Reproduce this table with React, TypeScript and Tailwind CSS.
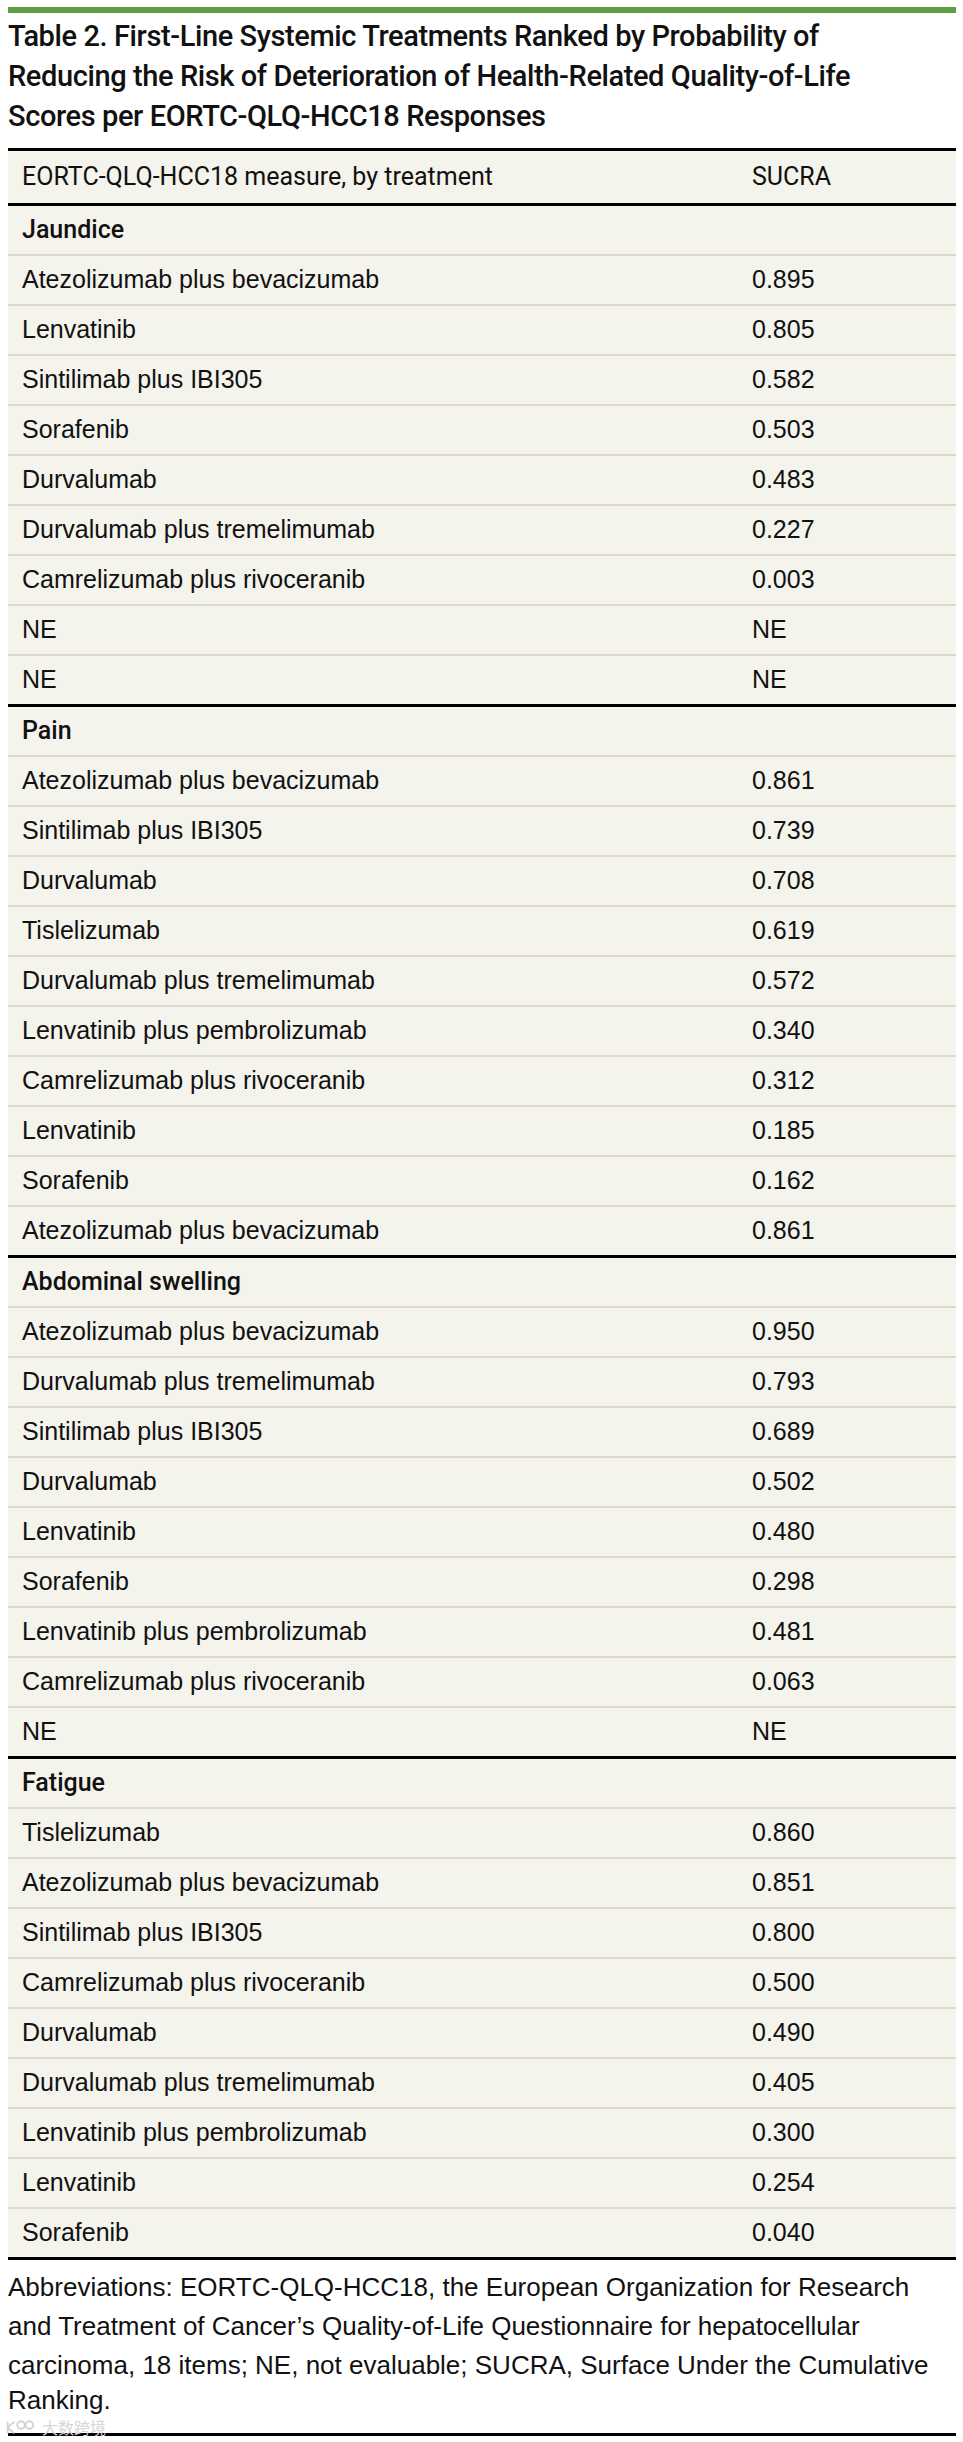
import React from 'react';

type Row = [string, string];

const SECTIONS: { title: string; rows: Row[] }[] = [
  {
    title: 'Jaundice',
    rows: [
      ['Atezolizumab plus bevacizumab', '0.895'],
      ['Lenvatinib', '0.805'],
      ['Sintilimab plus IBI305', '0.582'],
      ['Sorafenib', '0.503'],
      ['Durvalumab', '0.483'],
      ['Durvalumab plus tremelimumab', '0.227'],
      ['Camrelizumab plus rivoceranib', '0.003'],
      ['NE', 'NE'],
      ['NE', 'NE'],
    ],
  },
  {
    title: 'Pain',
    rows: [
      ['Atezolizumab plus bevacizumab', '0.861'],
      ['Sintilimab plus IBI305', '0.739'],
      ['Durvalumab', '0.708'],
      ['Tislelizumab', '0.619'],
      ['Durvalumab plus tremelimumab', '0.572'],
      ['Lenvatinib plus pembrolizumab', '0.340'],
      ['Camrelizumab plus rivoceranib', '0.312'],
      ['Lenvatinib', '0.185'],
      ['Sorafenib', '0.162'],
      ['Atezolizumab plus bevacizumab', '0.861'],
    ],
  },
  {
    title: 'Abdominal swelling',
    rows: [
      ['Atezolizumab plus bevacizumab', '0.950'],
      ['Durvalumab plus tremelimumab', '0.793'],
      ['Sintilimab plus IBI305', '0.689'],
      ['Durvalumab', '0.502'],
      ['Lenvatinib', '0.480'],
      ['Sorafenib', '0.298'],
      ['Lenvatinib plus pembrolizumab', '0.481'],
      ['Camrelizumab plus rivoceranib', '0.063'],
      ['NE', 'NE'],
    ],
  },
  {
    title: 'Fatigue',
    rows: [
      ['Tislelizumab', '0.860'],
      ['Atezolizumab plus bevacizumab', '0.851'],
      ['Sintilimab plus IBI305', '0.800'],
      ['Camrelizumab plus rivoceranib', '0.500'],
      ['Durvalumab', '0.490'],
      ['Durvalumab plus tremelimumab', '0.405'],
      ['Lenvatinib plus pembrolizumab', '0.300'],
      ['Lenvatinib', '0.254'],
      ['Sorafenib', '0.040'],
    ],
  },
];

function Cell({ label, value, bold }: { label: string; value?: string; bold?: boolean }) {
  return (
    <div
      className={`flex items-center h-[48px] pl-[14px] ${
        bold ? "font-['Roboto',sans-serif] font-medium" : ''
      }`}
    >
      <span className="w-[730px] shrink-0">{label}</span>
      <span>{value}</span>
    </div>
  );
}

export default function App() {
  return (
    <div className="relative w-[963px] min-h-[2442px] bg-white text-[#111] font-['Liberation_Sans',Arial,sans-serif]">
      <div className="pt-[7px] pl-2 pr-[7px]">
        {/* green rule */}
        <div className="h-[6px] bg-[#5e9f46]" />

        <h1 className="mt-[3px] text-[29px] leading-[40px] font-medium font-['Roboto',sans-serif] tracking-[-0.4px]">
          <span className="block">Table 2. First-Line Systemic Treatments Ranked by Probability of</span>
          <span className="block">Reducing the Risk of Deterioration of Health-Related Quality-of-Life</span>
          <span className="block">Scores per EORTC-QLQ-HCC18 Responses</span>
        </h1>

        {/* table */}
        <div className="mt-[12px] bg-[#f4f3ec] border-t-[3px] border-black text-[25px]">
          <div className="flex items-center h-[55px] pl-[14px] border-b-[3px] border-black font-['Roboto',sans-serif]">
            <span className="w-[730px] shrink-0">EORTC-QLQ-HCC18 measure, by treatment</span>
            <span>SUCRA</span>
          </div>

          {SECTIONS.map(section => (
            <div key={section.title} className="border-b-[3px] border-black">
              <div className="border-b-2 border-[#dcdacf]">
                <Cell label={section.title} bold />
              </div>
              {section.rows.map(([label, value], i) => (
                <div
                  key={i}
                  className={i < section.rows.length - 1 ? 'border-b-2 border-[#dcdacf]' : ''}
                >
                  <Cell label={label} value={value} />
                </div>
              ))}
            </div>
          ))}
        </div>

        {/* footnote */}
        <p className="mt-[8px] text-[26px] leading-[39px]">
          <span className="block">Abbreviations: EORTC-QLQ-HCC18, the European Organization for Research</span>
          <span className="block">and Treatment of Cancer’s Quality-of-Life Questionnaire for hepatocellular</span>
          <span className="block">carcinoma, 18 items; NE, not evaluable; SUCRA, Surface Under the Cumulative</span>
          <span className="block leading-[31px]">Ranking.</span>
        </p>

        <div className="mt-[17px] h-[3px] bg-black" />
      </div>

      {/* watermark */}
      <div className="absolute left-[5px] top-[2419px] flex items-center gap-[5px] text-[#d6d6d6] leading-none">
        <svg width="32" height="15" viewBox="0 0 38 18" fill="none" stroke="#d2d2d2" strokeWidth="2.2">
          <path d="M3 2v14M3 9l8-7M3 9l8 7" />
          <circle cx="19" cy="6" r="4.5" />
          <circle cx="29" cy="6" r="4.5" />
        </svg>
        <span className="font-['Noto_Sans_CJK_SC',sans-serif] text-[16px]">大数跨境</span>
      </div>
    </div>
  );
}
